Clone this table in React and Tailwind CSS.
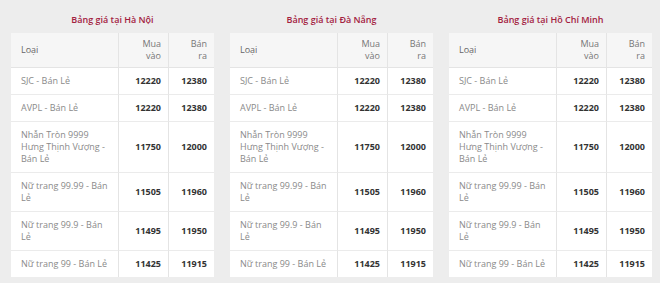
import React from "react";

const rows = [
    {name: "SJC - Bán Lẻ", buy: "12220", sell: "12380"},
    {name: "AVPL - Bán Lẻ", buy: "12220", sell: "12380"},
    {name: "Nhẫn Tròn 9999 Hưng Thịnh Vượng - Bán Lẻ", buy: "11750", sell: "12000"},
    {name: "Nữ trang 99.99 - Bán Lẻ", buy: "11505", sell: "11960"},
    {name: "Nữ trang 99.9 - Bán Lẻ", buy: "11495", sell: "11950"},
    {name: "Nữ trang 99 - Bán Lẻ", buy: "11425", sell: "11915"},
];

const cities = ["Hà Nội", "Đà Nẵng", "Hồ Chí Minh"];

const PriceTable = ({city}) => {
    return (
        <div className="w-[203px]">
            {/* Title */}
            <div className="h-[33px] pt-[14px] text-center text-[9px] leading-[12px] font-semibold text-[#a3213f]">
                Bảng giá tại {city}
            </div>

            {/* Table */}
            <div className="grid grid-cols-[107px_50px_46px] bg-white text-[9px] leading-[12px]">
                <div className="bg-[#f6f6f6] border-b border-[#e4e4e4] pl-[10px] pr-[6px] flex items-center text-[#666]">
                    Loại
                </div>
                <div className="bg-[#f6f6f6] border-b border-l border-[#e4e4e4] px-[7px] py-[5px] text-right text-[#777]">
                    Mua<br/>vào
                </div>
                <div className="bg-[#f6f6f6] border-b border-l border-[#e4e4e4] px-[7px] py-[5px] text-right text-[#777]">
                    Bán<br/>ra
                </div>

                {rows.map((r, i) => (
                    <React.Fragment key={i}>
                        <div className={`pl-[10px] pr-[6px] py-[7px] text-[#8a8a8a] ${i < rows.length - 1 ? "border-b border-[#ebebeb]" : ""}`}>
                            {r.name}
                        </div>
                        <div className={`px-[7px] flex items-center justify-end font-bold text-[#333] border-l border-[#e4e4e4] ${i < rows.length - 1 ? "border-b border-b-[#ebebeb]" : ""}`}>
                            {r.buy}
                        </div>
                        <div className={`px-[7px] flex items-center justify-end font-bold text-[#333] border-l border-[#e4e4e4] ${i < rows.length - 1 ? "border-b border-b-[#ebebeb]" : ""}`}>
                            {r.sell}
                        </div>
                    </React.Fragment>
                ))}
            </div>
        </div>
    );
};

const App = () => {
    return (
        <div className="w-[660px] h-[283px] bg-[#ededed] pl-[11px] flex gap-[16px] overflow-hidden" style={{fontFamily: '"Open Sans", sans-serif'}}>
            {cities.map((c) => (
                <PriceTable key={c} city={c}/>
            ))}
        </div>
    );
};

export default App;
